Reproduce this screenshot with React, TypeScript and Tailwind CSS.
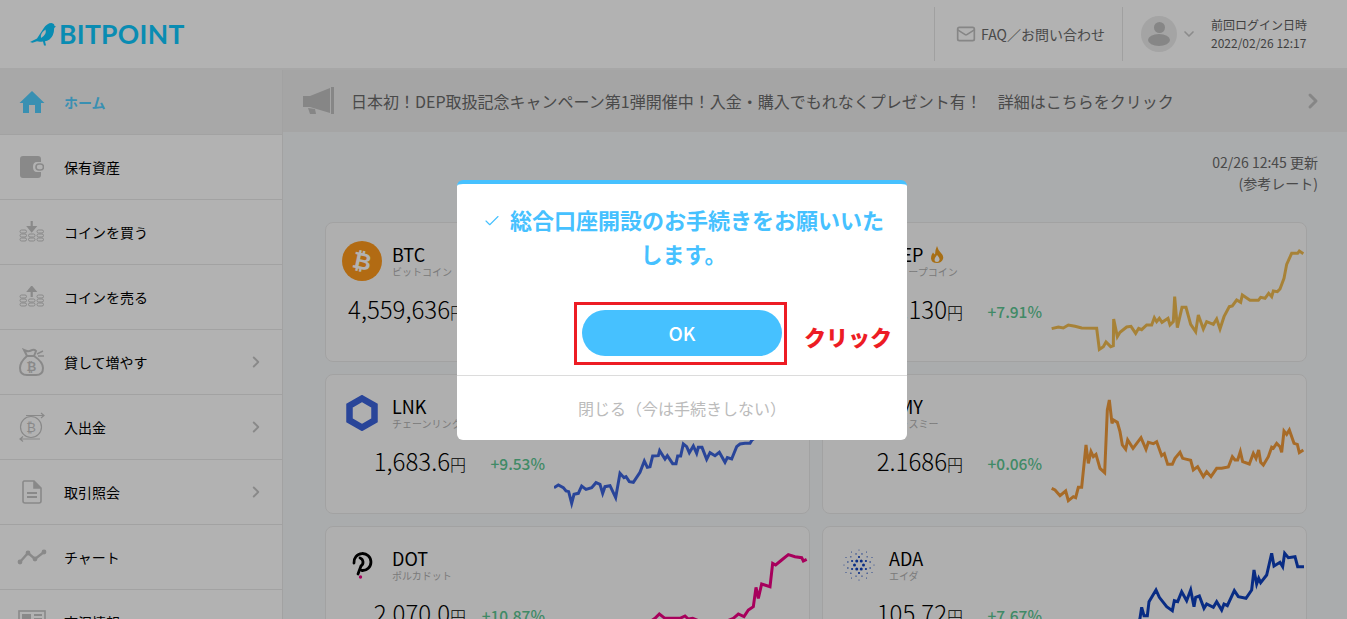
import type { ReactNode } from 'react';
import { ChevronRight, ChevronDown, Check, Mail } from 'lucide-react';

const font = { fontFamily: '"Noto Sans CJK JP", "Noto Sans", sans-serif' };

function HomeIcon() {
  return (
    <svg width="26" height="24" viewBox="0 0 26 24">
      <path d="M13 1 L25.5 13 L22 13 L22 23 L16 23 L16 15 L10 15 L10 23 L4 23 L4 13 L0.5 13 Z" fill="#52ceff" />
    </svg>
  );
}

function WalletIcon() {
  return (
    <svg width="24" height="22" viewBox="0 0 24 22">
      <path d="M3 0 H18 Q21 0 21 3 V6 H17 Q13 6 13 11 Q13 16 17 16 H21 V19 Q21 22 18 22 H3 Q0 22 0 19 V3 Q0 0 3 0 Z" fill="#c5c5c5" />
      <rect x="16" y="8" width="7.5" height="6" rx="3" fill="none" stroke="#c5c5c5" strokeWidth="1.6" />
    </svg>
  );
}

function CoinsIcon({ up }: { up?: boolean }) {
  const stack = (x: number, rows: number) =>
    Array.from({ length: rows }).map((_, i) => (
      <rect key={`${x}-${i}`} x={x} y={17 - i * 4} width="6.5" height="3" rx="1.5" fill="none" stroke="#c5c5c5" strokeWidth="1" />
    ));
  return (
    <svg width="26" height="22" viewBox="0 0 26 22">
      {stack(1, 3)}
      {stack(9.5, 2)}
      {stack(18, 3)}
      {up ? (
        <path d="M12.7 11 V3 M9.5 5 L12.7 1 L16 5 Z" stroke="#c5c5c5" strokeWidth="2.2" fill="#c5c5c5" />
      ) : (
        <path d="M12.7 0 V7 M9.5 6 L12.7 10 L16 6 Z" stroke="#c5c5c5" strokeWidth="2.2" fill="#c5c5c5" />
      )}
    </svg>
  );
}

function BagIcon() {
  return (
    <svg width="26" height="28" viewBox="0 0 26 28" fill="none" stroke="#c5c5c5" strokeWidth="2">
      <path d="M5 2 Q9 4 12 2.5 Q15 1 17 3 L15 8 H8 Z" />
      <path d="M8 8 Q1 14 1 20 Q1 27 8 27 H17 Q24 27 24 20 Q24 14 15 8" />
      <path d="M18 6 L24 3 M19 8 L25 8" strokeWidth="1.5" />
      <text x="12.5" y="22.5" textAnchor="middle" fontSize="12" fontWeight="700" fill="#c5c5c5" stroke="none" style={{ fontFamily: '"Liberation Sans", sans-serif' }}>
        ₿
      </text>
    </svg>
  );
}

function TransferIcon() {
  return (
    <svg width="28" height="30" viewBox="0 0 28 30" fill="none" stroke="#c5c5c5" strokeWidth="1.2">
      <circle cx="13" cy="15" r="10.5" />
      <path d="M8 3.5 H26 M23 1 L26 3.5 L23 6 M22 27 H2 M5 24.5 L2 27 L5 29.5" />
      <text x="13" y="20" textAnchor="middle" fontSize="13" fill="#c5c5c5" stroke="none" style={{ fontFamily: '"Liberation Sans", sans-serif' }}>
        ₿
      </text>
    </svg>
  );
}

function DocIcon() {
  return (
    <svg width="20" height="24" viewBox="0 0 20 24" fill="none" stroke="#c5c5c5" strokeWidth="1.6">
      <path d="M2 1 H12 L19 8 V21 Q19 23 17 23 H3 Q1 23 1 21 V2 Z" />
      <path d="M12 1 V8 H19" fill="#c5c5c5" />
      <path d="M5 13 H15 M5 17 H15" strokeWidth="2" />
    </svg>
  );
}

function TrendIcon() {
  return (
    <svg width="30" height="16" viewBox="0 0 30 16">
      <polyline points="3,13 11,4 18,10 27,3" fill="none" stroke="#c5c5c5" strokeWidth="2.4" />
      <circle cx="3" cy="13" r="2.4" fill="#c5c5c5" />
      <circle cx="11" cy="4" r="2.4" fill="#c5c5c5" />
      <circle cx="18" cy="10" r="2.4" fill="#c5c5c5" />
      <circle cx="27" cy="3" r="2.4" fill="#c5c5c5" />
    </svg>
  );
}

function NewsIcon() {
  return (
    <svg width="28" height="24" viewBox="0 0 28 24">
      <rect x="1" y="1" width="26" height="22" fill="none" stroke="#c5c5c5" strokeWidth="1.6" />
      <rect x="4" y="4" width="9" height="8" fill="#c5c5c5" />
      <path d="M16 5 H24 M16 9 H24 M4 15 H24 M4 19 H24" stroke="#c5c5c5" strokeWidth="2" />
    </svg>
  );
}

function BirdLogo() {
  return (
    <svg width="26" height="24" viewBox="0 0 26 24">
      <path
        d="M0 20 L7 16.5 L13.5 6.5 Q17 1 21.5 1 Q24.5 1.5 24.5 4 L26 4.5 L24.2 6 Q24 14 19.5 17.5 Q17 19.3 15 19.3 L16 23.5 L14 23.5 L13 19.5 Q9 20 7 19.3 L2.5 20.8 Z"
        fill="#0ec9ff"
      />
      <path d="M11 16 Q10 11.5 15.5 7.5 Q17 12.5 11 16 Z" fill="#fff" />
    </svg>
  );
}

function Megaphone() {
  return (
    <svg width="32" height="28" viewBox="0 0 32 28">
      <rect x="0" y="9" width="7" height="11" fill="#c0c0c0" />
      <path d="M7 9 L27 1 V26 L7 20 Z" fill="#c0c0c0" />
      <rect x="28" y="0" width="3" height="27" fill="#c0c0c0" />
      <path d="M5 21 L12 22 L13 27 H7 Z" fill="#c0c0c0" />
    </svg>
  );
}

function BtcIcon() {
  return (
    <svg width="40" height="40" viewBox="0 0 40 40">
      <circle cx="20" cy="20" r="20" fill="#ff9a1c" />
      <text x="20" y="28" textAnchor="middle" fontSize="23" fontWeight="700" fill="#fff" transform="rotate(12 20 20)" style={{ fontFamily: '"Liberation Sans", sans-serif' }}>
        ₿
      </text>
    </svg>
  );
}

function LinkIcon() {
  return (
    <svg width="32" height="36" viewBox="0 0 32 36">
      <polygon points="16,3.5 28.5,10.7 28.5,25.3 16,32.5 3.5,25.3 3.5,10.7" fill="none" stroke="#3c63dc" strokeWidth="6.5" />
    </svg>
  );
}

function DotIcon() {
  return (
    <svg width="22" height="28" viewBox="0 0 22 28">
      <path d="M3 12 A8.5 8.5 0 1 1 11 19.5 M9 7 A4.5 4.5 0 0 1 10 15 L7 23" fill="none" stroke="#000" strokeWidth="2.8" strokeLinecap="round" />
      <circle cx="9.5" cy="26" r="1.7" fill="#f00085" />
    </svg>
  );
}

function AdaIcon() {
  const rings = [
    { n: 6, r: 4.5, d: 1.5, o: 0 },
    { n: 6, r: 8, d: 1.1, o: 30 },
    { n: 12, r: 11.5, d: 0.7, o: 15 },
    { n: 12, r: 15, d: 0.5, o: 0 },
  ];
  return (
    <svg width="32" height="32" viewBox="-16 -16 32 32">
      {rings.map((ring) =>
        Array.from({ length: ring.n }).map((_, i) => {
          const a = ((i * 360) / ring.n + ring.o) * (Math.PI / 180);
          return <circle key={`${ring.r}-${i}`} cx={ring.r * Math.cos(a)} cy={ring.r * Math.sin(a)} r={ring.d} fill="#0e40be" />;
        }),
      )}
    </svg>
  );
}

function Flame() {
  return (
    <svg width="14" height="17" viewBox="0 0 14 17" className="ml-[7px]">
      <path d="M7 0 Q8 4 11 7 Q14 10 13 13 Q11.5 17 7 17 Q1.5 17 1 12.5 Q1 9 3 6.5 Q4 8 5 8.5 Q5 4 7 0 Z" fill="#f0a020" />
      <path d="M7 9 Q10 12 9.5 14 Q9 16 7 16 Q4.5 16 4.5 14 Q4.5 12 7 9 Z" fill="#ffffff" />
    </svg>
  );
}

type Coin = {
  sym: string;
  sub: string;
  price: string;
  pct: string;
  icon: ReactNode;
  color: string;
  box: string; // viewBox of the 3x traced line
  line: string;
  flame?: boolean;
};

const coins: Coin[] = [
  {
    sym: 'BTC',
    sub: 'ビットコイン',
    price: '4,559,636',
    pct: '+6.62%',
    icon: <BtcIcon />,
    color: '#ff9a1c',
    box: '0 0 768 420',
    line: '0,300 200,280 400,240 768,80',
  },
  {
    sym: 'DEP',
    sub: 'ディープコイン',
    price: '33.130',
    pct: '+7.91%',
    icon: <div className="w-10 h-10 rounded-full bg-[#f0bb50]" />,
    color: '#f0bb50',
    box: '453 21 768 420',
    line: '455,341 475,336 490,339 505,330 525,334 545,339 590,340 598,403 610,395 618,381 632,395 640,392 641,312 652,365 660,352 680,336 693,334 707,355 716,340 725,344 740,330 755,330 763,308 770,320 778,310 786,322 804,310 810,330 820,320 824,245 832,338 846,277 858,277 872,328 887,350 895,300 910,342 920,320 940,328 950,312 960,342 972,305 988,275 997,273 1010,255 1022,262 1027,240 1050,256 1075,256 1082,247 1095,250 1106,235 1115,245 1120,228 1132,230 1140,222 1152,190 1160,148 1175,115 1193,115 1198,108 1210,116',
    flame: true,
  },
  {
    sym: 'LNK',
    sub: 'チェーンリンク',
    price: '1,683.6',
    pct: '+9.53%',
    icon: <LinkIcon />,
    color: '#3c63dc',
    box: '12 -183 768 420',
    line: '12,158 25,150 40,158 48,168 56,170 65,205 72,178 85,175 95,153 108,163 125,158 138,143 150,148 158,175 165,155 180,152 197,188 210,115 222,128 228,125 238,140 250,142 270,112 283,78 292,97 300,95 308,63 325,62 329,47 345,72 352,62 368,86 378,86 383,63 392,63 400,27 410,35 418,53 430,33 440,55 445,37 456,37 470,73 480,53 495,62 508,52 525,82 532,68 545,72 560,35 570,27 585,25 600,25 606,15 700,-50 770,-100',
  },
  {
    sym: 'JMY',
    sub: 'ジャスミー',
    price: '2.1686',
    pct: '+0.06%',
    icon: <div className="w-10 h-10 rounded-full bg-[#f09a3a]" />,
    color: '#f09a3a',
    box: '453 477 768 420',
    line: '455,820 465,825 480,842 497,828 505,857 520,845 527,848 535,817 545,817 558,690 565,745 573,710 580,725 588,718 600,760 614,773 622,585 628,555 636,625 640,615 652,622 660,650 667,690 677,703 683,675 699,700 723,668 738,703 745,682 760,686 770,680 785,722 793,716 803,748 817,748 825,730 840,712 848,730 872,736 880,765 893,755 910,785 920,770 933,785 950,760 965,760 985,756 997,725 1005,735 1013,735 1021,710 1028,740 1048,747 1060,715 1068,730 1076,705 1082,742 1090,750 1105,725 1115,697 1120,700 1130,685 1140,695 1145,712 1152,648 1160,658 1168,645 1182,685 1192,688 1198,713 1210,705',
  },
  {
    sym: 'DOT',
    sub: 'ポルカドット',
    price: '2,070.0',
    pct: '+10.87%',
    icon: <DotIcon />,
    color: '#f00085',
    box: '702 48 768 420',
    line: '702,390 800,360 900,350 990,335 1005,325 1018,312 1035,325 1080,325 1095,318 1105,327 1118,325 1180,350 1240,325 1255,312 1272,320 1285,300 1300,290 1308,232 1315,265 1325,222 1350,230 1358,160 1367,165 1385,150 1405,134 1425,140 1445,143 1450,153 1460,148',
  },
  {
    sym: 'ADA',
    sub: 'エイダ',
    price: '105.72',
    pct: '+7.67%',
    icon: <AdaIcon />,
    color: '#0e40be',
    box: '693 48 768 420',
    line: '693,400 800,370 900,350 950,345 960,325 965,292 972,317 982,317 987,275 1008,240 1018,262 1040,290 1057,302 1063,272 1073,275 1085,245 1100,272 1112,240 1122,290 1127,262 1138,258 1152,295 1160,282 1180,292 1190,275 1205,300 1212,282 1222,287 1243,242 1255,260 1278,265 1295,240 1302,180 1310,222 1316,205 1322,218 1340,195 1355,130 1362,168 1380,157 1388,170 1394,130 1405,143 1425,140 1433,170 1452,170',
  },
];

function CoinCard({ coin }: { coin: Coin }) {
  return (
    <div className="flex h-[140px] bg-[#fbfbfb] border border-[#e9e9e9] rounded-lg overflow-hidden">
      <div className="w-[228px] shrink-0">
        <div className="flex items-center pl-4 pt-[18px]">
          <div className="w-10 h-10 flex items-center justify-center mr-[10px]">{coin.icon}</div>
          <div>
            <div className="flex items-center text-[18px] leading-[20px] mb-[2px] text-black">
              {coin.sym}
              {coin.flame && <Flame />}
            </div>
            <div className="text-[10px] leading-[12px] text-[#b0b0b0]">{coin.sub}</div>
          </div>
        </div>
        <div className="flex items-center mt-[13px] h-[30px]">
          <div className="w-[140px] shrink-0 text-right text-black whitespace-nowrap">
            <span className="text-[24px] font-light">{coin.price}</span>
            <span className="text-[16px] font-light">円</span>
          </div>
          <div className="w-[79px] shrink-0 pt-[6px] text-right text-[15.5px] font-medium text-[#5cc692] whitespace-nowrap">{coin.pct}</div>
        </div>
      </div>
      <svg className="w-[256px] h-[140px] shrink-0 -mt-px" viewBox={coin.box}>
        <polyline points={coin.line} fill="none" stroke={coin.color} strokeWidth="9" strokeLinejoin="miter" />
      </svg>
    </div>
  );
}

const menu: { label: string; icon: ReactNode; more?: boolean }[] = [
  { label: '保有資産', icon: <WalletIcon /> },
  { label: 'コインを買う', icon: <CoinsIcon /> },
  { label: 'コインを売る', icon: <CoinsIcon up /> },
  { label: '貸して増やす', icon: <BagIcon />, more: true },
  { label: '入出金', icon: <TransferIcon />, more: true },
  { label: '取引照会', icon: <DocIcon />, more: true },
  { label: 'チャート', icon: <TrendIcon /> },
  { label: '市況情報', icon: <NewsIcon /> },
];

export default function App() {
  return (
    <div className="relative h-[619px] overflow-hidden bg-white text-black" style={font}>
      <header className="flex items-center h-[70px] border-b-2 border-[#efefef] bg-white">
        <div className="flex items-center pl-[30px] flex-1">
          <BirdLogo />
          <span className="ml-[3px] text-[26.5px] leading-none font-bold tracking-[0.3px] text-[#0ec9ff]" style={{ fontFamily: 'Lato, sans-serif' }}>
            BITPOINT
          </span>
        </div>
        <div className="flex items-center h-[54px] w-[188px] border-l border-[#e6e6e6] pl-[21px]">
          <Mail size={20} strokeWidth={2} className="text-[#c0c0c0]" />
          <span className="ml-[5px] text-[14px] text-[#6a6a6a] whitespace-nowrap">FAQ／お問い合わせ</span>
        </div>
        <div className="flex items-center h-[54px] w-[225px] border-l border-[#e6e6e6] pl-[18px]">
          <div className="w-9 h-9 rounded-full bg-[#ebebeb] flex flex-col items-center justify-center">
            <div className="w-[11px] h-[11px] rounded-full bg-[#c0c0c0]" />
            <div className="w-[22px] h-[12px] rounded-[50%] bg-[#c0c0c0] mt-[1px]" />
          </div>
          <ChevronDown size={16} strokeWidth={2.5} className="ml-[4px] text-[#c8c8c8]" />
          <div className="ml-[14px] text-[12px] leading-[18px] text-[#5e5e5e] whitespace-nowrap">
            <div>前回ログイン日時</div>
            <div>2022/02/26 12:17</div>
          </div>
        </div>
      </header>

      <div className="flex">
        <aside className="w-[283px] shrink-0 border-r border-[#e9e9e9]">
          <div className="flex items-center h-[65px] bg-[#f1f1f1] border-b border-[#e9e9e9] pl-[19px]">
            <div className="w-[26px] flex justify-center mr-[19px]">
              <HomeIcon />
            </div>
            <span className="text-[14px] font-bold text-[#52ceff]">ホーム</span>
          </div>
          {menu.map((item) => (
            <div key={item.label} className="flex items-center h-[65px] border-b border-[#e9e9e9] pl-[17px] pr-[17px]">
              <div className="w-[30px] flex justify-center mr-[17px]">{item.icon}</div>
              <span className="text-[14px] flex-1">{item.label}</span>
              {item.more && <ChevronRight size={18} strokeWidth={2.5} className="text-[#c4c4c4]" />}
            </div>
          ))}
        </aside>

        <main className="flex-1 bg-[#f4f6f8]">
          <div className="flex items-center h-[62px] bg-[#ededed] pl-[20px] pr-[22px]">
            <Megaphone />
            <span className="ml-[16px] flex-1 text-[16px] text-[#6a6a6a] whitespace-nowrap">
              日本初！DEP取扱記念キャンペーン第1弾開催中！入金・購入でもれなくプレゼント有！　詳細はこちらをクリック
            </span>
            <ChevronRight size={24} strokeWidth={3} className="text-[#c0c0c0]" />
          </div>
          <div className="pr-[29px] pt-[20px] text-right text-[14px] leading-[21px] text-[#6a6a6a]">
            <div>02/26 12:45 更新</div>
            <div>(参考レート)</div>
          </div>
          <div className="grid grid-cols-[485px_485px] gap-3 pl-[42px] pt-[28px]">
            {coins.map((coin) => (
              <CoinCard key={coin.sym} coin={coin} />
            ))}
          </div>
        </main>
      </div>

      <div className="absolute inset-0 bg-black/30 flex items-center justify-center pl-[17px]">
        <div className="w-[450px] h-[260px] bg-white rounded-md border-t-4 border-[#46c1ff] flex flex-col">
          <div className="flex-1 pl-[23px] pr-[20px] pt-[18px] text-center text-[22px] leading-[34px] font-bold text-[#46c1ff]">
            <Check size={18} strokeWidth={1.5} className="inline-block mr-[9px] -mt-[3px]" />
            総合口座開設のお手続きをお願いいたします。
            <div className="flex justify-center mt-[40px] -ml-[3px]">
              <div className="relative">
                <button className="w-[200px] h-[46px] rounded-full bg-[#46c1ff] text-white text-[19px] font-medium">OK</button>
                <div className="absolute -top-2 -left-2 -right-[5px] -bottom-[9px] border-[3px] border-[#ed1c24]" />
                <span className="absolute left-full top-[3px] ml-[22px] h-[46px] flex items-center text-[22px] font-black text-[#ed1c24] whitespace-nowrap">
                  クリック
                </span>
              </div>
            </div>
          </div>
          <div className="h-[65px] border-t border-[#dcdcdc] flex items-center justify-center text-[16px] text-[#bbbbbb]">
            閉じる（今は手続きしない）
          </div>
        </div>
      </div>
    </div>
  );
}
